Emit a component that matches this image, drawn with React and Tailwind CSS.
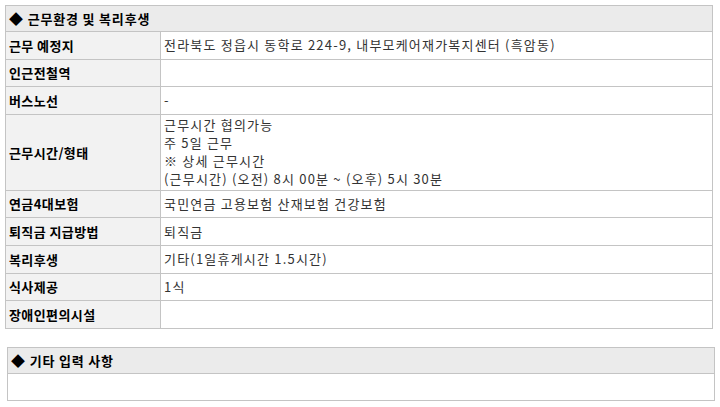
const rows = [
    { label: '근무 예정지', value: ['전라북도 정읍시 동학로 224-9, 내부모케어재가복지센터 (흑암동)'] },
    { label: '인근전철역', value: [] },
    { label: '버스노선', value: ['-'] },
    {
        label: '근무시간/형태',
        value: ['근무시간 협의가능', '주 5일 근무', '※ 상세 근무시간', '(근무시간) (오전) 8시 00분 ~ (오후) 5시 30분'],
    },
    { label: '연금4대보험', value: ['국민연금 고용보험 산재보험 건강보험'] },
    { label: '퇴직금 지급방법', value: ['퇴직금'] },
    { label: '복리후생', value: ['기타(1일휴게시간 1.5시간)'] },
    { label: '식사제공', value: ['1식'] },
    { label: '장애인편의시설', value: [] },
]

export default function App() {
    return (
        <div
            className="w-[720px] h-[407px] bg-white text-[13px] text-[#222] overflow-hidden"
            style={{ fontFamily: '"Noto Sans CJK KR", "Noto Sans", sans-serif' }}
        >
            {/* 근무환경 및 복리후생 */}
            <div className="ml-[5px] mt-[5px] w-[708px] border border-[#c4c4c4]">
                <div className="h-[26px] flex items-center px-[3px] bg-[#ebebeb] font-bold text-black tracking-[0.8px] border-b border-[#c4c4c4]">
                    <span className="text-[14px] mr-[4px]">◆</span>근무환경 및 복리후생
                </div>
                {rows.map((r, i) => (
                    <div
                        key={r.label}
                        className={`grid grid-cols-[155px_1fr] ${i < rows.length - 1 ? 'border-b border-[#c4c4c4]' : ''}`}
                    >
                        <div className="bg-[#f2f2f2] font-bold text-black tracking-[0.4px] flex items-center px-[3px] min-h-[26.6px] border-r border-[#c4c4c4]">
                            {r.label}
                        </div>
                        <div className="flex flex-col justify-center px-[3px] py-[1.5px] leading-[18px] tracking-[1.2px] text-[#333] min-h-[26.6px]">
                            {r.value.map(v => (
                                <span key={v}>{v}</span>
                            ))}
                        </div>
                    </div>
                ))}
            </div>

            {/* 기타 입력 사항 */}
            <div className="ml-[7px] mt-[18px] w-[708px] border border-[#c4c4c4]">
                <div className="h-[26px] flex items-center px-[3px] bg-[#ebebeb] font-bold text-black tracking-[0.8px] border-b border-[#c4c4c4]">
                    <span className="text-[14px] mr-[4px]">◆</span>기타 입력 사항
                </div>
                <div className="h-[26px]" />
            </div>
        </div>
    )
}
